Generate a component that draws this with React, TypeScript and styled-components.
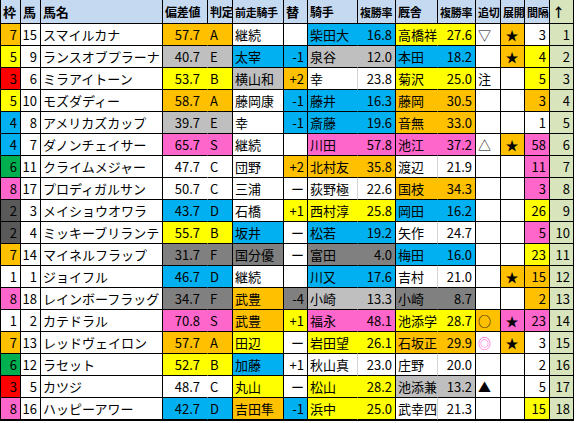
import React from "react";
import styled, { createGlobalStyle } from "styled-components";

const Color = {
  O: "#ffc000",
  Y: "#ffff00",
  B: "#00b0f0",
  P: "#ff66cc",
  L: "#bfbfbf",
  D: "#808080",
  W: "#ffffff",
  R: "#ff0000",
  N: "#00b050",
  K: "#595959",
};
type C = keyof typeof Color;

const GlobalStyle = createGlobalStyle`
  body {
    margin: 0;
    background: #ffffff;
    font-family: "Noto Sans CJK JP", "Noto Sans", sans-serif;
    color: #000;
  }
`;

const COLS = "20px 20px 122px 45px 25px 51px 24px 50px 38px 42px 38px 25px 24px 25px 24px";

const Sheet = styled.div`
  display: grid;
  grid-template-columns: ${COLS};
  grid-auto-rows: 22px;
  grid-template-rows: 24px;
  width: max-content;
  border-left: 1px solid #000;
  border-bottom: 1px solid #000;
`;

const Head = styled.div<{ size?: number; last?: boolean }>`
  box-sizing: border-box;
  background: ${(p) => (p.last ? "#d8e4bc" : "#c5d9f1")};
  border-right: 1px solid #000;
  border-bottom: 1px solid #000;
  font-size: ${(p) => p.size ?? 13}px;
  font-weight: 700;
  display: flex;
  align-items: center;
  padding-left: 2px;
  white-space: nowrap;
  overflow: hidden;
  letter-spacing: -0.3px;
`;

const Cell = styled.div<{ bg?: string; align?: "left" | "right" | "center"; line?: "none" | "light" | "dark"; pr?: number }>`
  box-sizing: border-box;
  background: ${(p) => p.bg ?? "#fff"};
  border-right: 1px solid
    ${(p) => (p.line === "none" ? "transparent" : p.line === "light" ? "#d4d4d4" : "#000")};
  border-bottom: 1px solid #000;
  font-size: 13px;
  display: flex;
  align-items: center;
  justify-content: ${(p) => (p.align === "right" ? "flex-end" : p.align === "center" ? "center" : "flex-start")};
  padding: 0 ${(p) => p.pr ?? 3}px 0 2px;
  white-space: nowrap;
  overflow: hidden;
`;

const RankCell = styled(Cell)`
  background: #d8e4bc;
`;

const Mark = styled.span<{ tint?: string }>`
  color: ${(p) => p.tint ?? "#000"};
  font-size: 13px;
`;

type Row = [
  number, C, number, string, string, string, C,
  string, C, string, C,
  string, string, C, string, string, C,
  string, C, string, C, number, C
];

// 枠, 枠色, 馬番, 馬名, 偏差値, 判定, 色, 前走騎手, 色, 替, 色, 騎手, 率, 色, 厩舎, 率, 色, 追切, 色, 展開, 色, 間隔, 色
const rows: Row[] = [
  [7, "O", 15, "スマイルカナ", "57.7", "A", "O", "継続", "W", "", "W", "柴田大", "16.8", "B", "高橋祥", "27.6", "Y", "▽", "W", "★", "O", 3, "W"],
  [5, "Y", 9, "ランスオブプラーナ", "40.7", "E", "L", "太宰", "B", "-1", "B", "泉谷", "12.0", "L", "本田", "18.2", "B", "", "W", "★", "O", 4, "Y"],
  [3, "R", 6, "ミラアイトーン", "53.7", "B", "Y", "横山和", "L", "+2", "O", "幸", "23.8", "W", "菊沢", "25.0", "Y", "注", "W", "", "W", 5, "Y"],
  [5, "Y", 10, "モズダディー", "58.7", "A", "O", "藤岡康", "W", "-1", "B", "藤井", "16.3", "B", "藤岡", "30.5", "O", "", "W", "", "W", 3, "O"],
  [4, "B", 8, "アメリカズカップ", "39.7", "E", "L", "幸", "W", "-1", "B", "斎藤", "19.6", "B", "音無", "33.0", "O", "", "W", "", "W", 1, "W"],
  [4, "B", 7, "ダノンチェイサー", "65.7", "S", "P", "継続", "W", "", "W", "川田", "57.8", "P", "池江", "37.2", "P", "△", "W", "★", "O", 58, "P"],
  [6, "N", 11, "クライムメジャー", "47.7", "C", "W", "団野", "W", "+2", "O", "北村友", "35.8", "O", "渡辺", "21.9", "W", "", "W", "", "W", 11, "P"],
  [8, "P", 17, "プロディガルサン", "50.7", "C", "W", "三浦", "W", "ー", "W", "荻野極", "22.6", "W", "国枝", "34.3", "O", "", "W", "", "W", 3, "P"],
  [2, "K", 3, "メイショウオワラ", "43.7", "D", "B", "石橋", "W", "+1", "Y", "西村淳", "25.8", "Y", "岡田", "16.2", "B", "", "W", "", "W", 26, "Y"],
  [2, "K", 4, "ミッキーブリランテ", "55.7", "B", "Y", "坂井", "B", "ー", "W", "松若", "19.2", "B", "矢作", "24.7", "W", "", "W", "", "W", 5, "P"],
  [7, "O", 14, "マイネルフラップ", "31.7", "F", "D", "国分優", "D", "ー", "W", "富田", "4.0", "D", "梅田", "16.0", "B", "", "W", "", "W", 23, "Y"],
  [1, "W", 1, "ジョイフル", "46.7", "D", "B", "継続", "W", "", "W", "川又", "17.6", "B", "吉村", "21.0", "W", "", "W", "★", "O", 15, "O"],
  [8, "P", 18, "レインボーフラッグ", "34.7", "F", "D", "武豊", "O", "-4", "D", "小崎", "13.3", "L", "小崎", "8.7", "D", "", "W", "", "W", 2, "O"],
  [1, "W", 2, "カテドラル", "70.8", "S", "P", "武豊", "O", "+1", "Y", "福永", "48.1", "P", "池添学", "28.7", "Y", "○", "O", "★", "P", 23, "P"],
  [7, "O", 13, "レッドヴェイロン", "57.7", "A", "O", "田辺", "Y", "ー", "W", "岩田望", "26.1", "Y", "石坂正", "29.9", "O", "◎", "W", "★", "O", 3, "W"],
  [6, "N", 12, "ラセット", "52.7", "B", "Y", "加藤", "B", "+1", "W", "秋山真", "23.0", "W", "庄野", "20.0", "W", "", "W", "", "W", 2, "W"],
  [3, "R", 5, "カツジ", "48.7", "C", "W", "丸山", "Y", "ー", "W", "松山", "28.2", "Y", "池添兼", "13.2", "L", "▲", "W", "", "W", 5, "W"],
  [8, "P", 16, "ハッピーアワー", "42.7", "D", "B", "吉田隼", "O", "-1", "B", "浜中", "25.0", "Y", "武幸四", "21.3", "W", "", "W", "", "W", 15, "Y"],
];

const heads: [string, number, boolean?][] = [
  ["枠", 13],
  ["馬", 13],
  ["馬名", 13],
  ["偏差値", 12],
  ["判定", 12],
  ["前走騎手", 11],
  ["替", 13],
  ["騎手", 12],
  ["複勝率", 11],
  ["厩舎", 12],
  ["複勝率", 11],
  ["追切", 11],
  ["展開", 11],
  ["間隔", 11],
  ["↑", 13, true],
];

export default function App() {
  return (
    <>
      <GlobalStyle />
      <Sheet>
        {heads.map(([t, s, last], i) => (
          <Head key={i} size={s} last={last}>
            {t}
          </Head>
        ))}
        {rows.map((r, i) => {
          const [waku, wc, num, name, dev, grade, dc, prev, pc, chg, cc, jockey, jr, jc, trainer, tr, tc, oi, oc, ten, tec, gap, gc] = r;
          return (
            <React.Fragment key={i}>
              <Cell bg={Color[wc]} align="right">{waku}</Cell>
              <Cell align="right">{num}</Cell>
              <Cell>{name}</Cell>
              <Cell bg={Color[dc]} align="right" line="none" pr={7}>{dev}</Cell>
              <Cell bg={Color[dc]}>{grade}</Cell>
              <Cell bg={Color[pc]}>{prev}</Cell>
              <Cell bg={Color[cc]} align="right">{chg}</Cell>
              <Cell bg={Color[jc]} line={jc === "W" ? "light" : "none"}>{jockey}</Cell>
              <Cell bg={Color[jc]} align="right">{jr}</Cell>
              <Cell bg={Color[tc]} line={tc === "W" ? "light" : "none"}>{trainer}</Cell>
              <Cell bg={Color[tc]} align="right">{tr}</Cell>
              <Cell bg={Color[oc]}>
                <Mark tint={oi === "◎" ? "#ff33cc" : undefined}>{oi}</Mark>
              </Cell>
              <Cell bg={Color[tec]} align="center">{ten}</Cell>
              <Cell bg={Color[gc]} align="right">{gap}</Cell>
              <RankCell align="right">{i + 1}</RankCell>
            </React.Fragment>
          );
        })}
      </Sheet>
    </>
  );
}
